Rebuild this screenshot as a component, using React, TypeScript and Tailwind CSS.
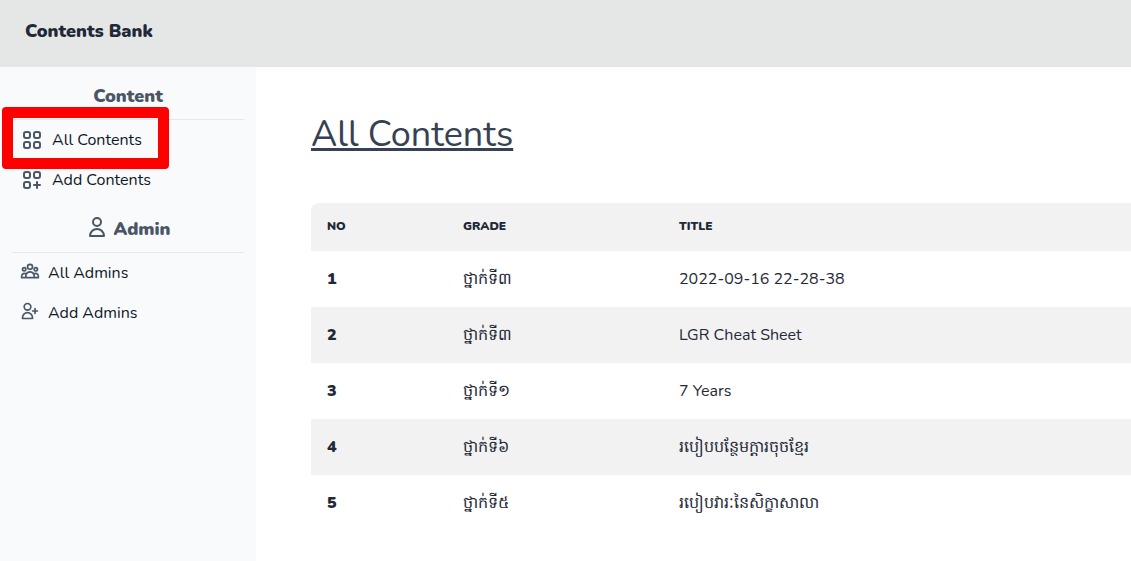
import type { ReactNode } from "react";

const iconPaths = {
  grid: "M4 6a2 2 0 012-2h2a2 2 0 012 2v2a2 2 0 01-2 2H6a2 2 0 01-2-2V6zM14 6a2 2 0 012-2h2a2 2 0 012 2v2a2 2 0 01-2 2h-2a2 2 0 01-2-2V6zM4 16a2 2 0 012-2h2a2 2 0 012 2v2a2 2 0 01-2 2H6a2 2 0 01-2-2v-2zM14 16a2 2 0 012-2h2a2 2 0 012 2v2a2 2 0 01-2 2h-2a2 2 0 01-2-2v-2z",
  gridAdd:
    "M17 14v6m-3-3h6M6 10h2a2 2 0 002-2V6a2 2 0 00-2-2H6a2 2 0 00-2 2v2a2 2 0 002 2zm10 0h2a2 2 0 002-2V6a2 2 0 00-2-2h-2a2 2 0 00-2 2v2a2 2 0 002 2zM6 20h2a2 2 0 002-2v-2a2 2 0 00-2-2H6a2 2 0 00-2 2v2a2 2 0 002 2z",
  user: "M16 7a4 4 0 11-8 0 4 4 0 018 0zM12 14a7 7 0 00-7 7h14a7 7 0 00-7-7z",
  group:
    "M17 20h5v-2a3 3 0 00-5.356-1.857M17 20H7m10 0v-2c0-.656-.126-1.283-.356-1.857M7 20H2v-2a3 3 0 015.356-1.857M7 20v-2c0-.656.126-1.283.356-1.857m0 0a5.002 5.002 0 019.288 0M15 7a3 3 0 11-6 0 3 3 0 016 0zm6 3a2 2 0 11-4 0 2 2 0 014 0zM7 10a2 2 0 11-4 0 2 2 0 014 0z",
  userAdd:
    "M18 9v3m0 0v3m0-3h3m-3 0h-3m-2-5a4 4 0 11-8 0 4 4 0 018 0zM3 20a6 6 0 0112 0v1H3v-1z",
};

function Icon({ name, className }: { name: keyof typeof iconPaths; className: string }) {
  return (
    <svg
      aria-hidden="true"
      viewBox="0 0 24 24"
      fill="none"
      stroke="currentColor"
      strokeWidth="2"
      strokeLinecap="round"
      strokeLinejoin="round"
      className={className}
    >
      <path d={iconPaths[name]} />
    </svg>
  );
}

function NavLink({ icon, children }: { icon: ReactNode; children: ReactNode }) {
  return (
    <a href="#" className="flex h-10 items-center gap-2 px-2 text-base text-gray-900">
      {icon}
      {children}
    </a>
  );
}

const rows = [
  { no: 1, grade: "ថ្នាក់ទី៣", title: "2022-09-16 22-28-38" },
  { no: 2, grade: "ថ្នាក់ទី៣", title: "LGR Cheat Sheet" },
  { no: 3, grade: "ថ្នាក់ទី១", title: "7 Years" },
  { no: 4, grade: "ថ្នាក់ទី៦", title: "របៀបបន្ថែមក្តារចុចខ្មែរ" },
  { no: 5, grade: "ថ្នាក់ទី៥", title: "របៀបវារៈនៃសិក្ខាសាលា" },
];

export default function App() {
  return (
    <div className="flex min-h-screen flex-col bg-white font-[Nunito,Lato,sans-serif] text-[#1f2937]">
      <header className="h-[67px] bg-[#e5e7e6] px-[25px] pt-[17px]">
        <a href="#" className="text-lg font-black">
          Contents Bank
        </a>
      </header>
      <div className="flex flex-1">
        <aside className="w-64 shrink-0 bg-[#f9fafc] px-3 pt-3">
          <h2 className="flex h-[41px] items-center justify-center border-b border-gray-200 pb-1.5 text-lg font-black text-gray-600">
            Content
          </h2>
          <nav aria-label="Content">
            <div className="relative">
              <NavLink icon={<Icon name="grid" className="size-6 text-gray-600" />}>
                All Contents
              </NavLink>
              <div className="pointer-events-none absolute -top-[13px] -left-[10px] h-[62px] w-[167px] rounded-[4px] border-[11px] border-[#ff0000]" />
            </div>
            <NavLink icon={<Icon name="gridAdd" className="size-6 text-gray-600" />}>
              Add Contents
            </NavLink>
          </nav>
          <h2 className="flex h-[53px] items-center justify-center gap-1 border-b border-gray-200 pt-1.5 text-lg font-black text-gray-600">
            <Icon name="user" className="mb-1 size-6" />
            Admin
          </h2>
          <nav aria-label="Admin">
            <NavLink icon={<Icon name="group" className="mb-1 size-5 text-gray-600" />}>
              All Admins
            </NavLink>
            <NavLink icon={<Icon name="userAdd" className="mb-1 size-5 text-gray-600" />}>
              Add Admins
            </NavLink>
          </nav>
        </aside>
        <main className="min-w-0 flex-1 pt-[46px] pl-[55px]">
          <h1 className="text-4xl leading-[44px] text-gray-700 underline">All Contents</h1>
          <table className="mt-[46px] w-full table-fixed text-left">
            <thead>
              <tr className="h-12 bg-[#f2f2f2] text-xs uppercase">
                <th className="w-[136px] rounded-tl-lg px-4 pb-0.5 font-black">No</th>
                <th className="w-[216px] px-4 pb-0.5 font-black">Grade</th>
                <th className="px-4 pb-0.5 font-black">Title</th>
              </tr>
            </thead>
            <tbody>
              {rows.map((row) => (
                <tr key={row.no} className="h-14 even:bg-[#f2f2f2]">
                  <th scope="row" className="px-4 font-black">
                    {row.no}
                  </th>
                  <td className="px-4">{row.grade}</td>
                  <td className="px-4">{row.title}</td>
                </tr>
              ))}
            </tbody>
          </table>
        </main>
      </div>
    </div>
  );
}
